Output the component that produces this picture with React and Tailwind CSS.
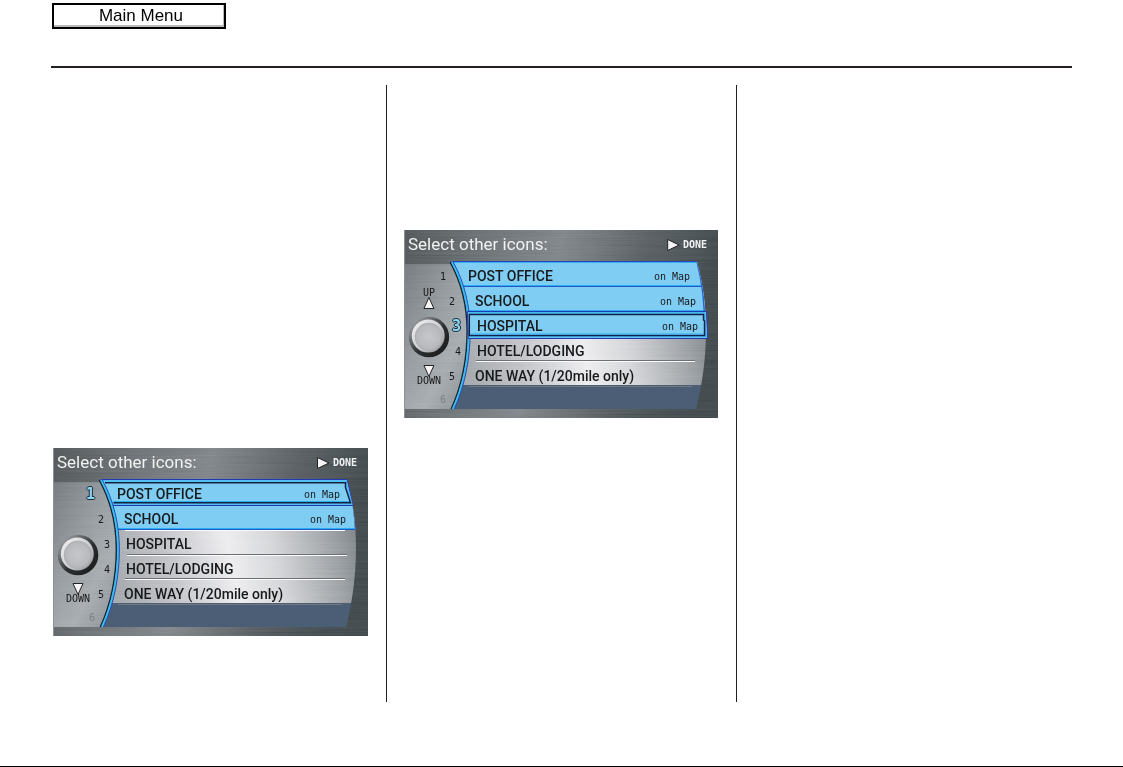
import React, { useId } from "react";

const LABELS = ["POST OFFICE", "SCHOOL", "HOSPITAL", "HOTEL/LODGING", "ONE WAY (1/20mile only)"];

// The list bends around the knob, so each row has its own indent.
const NUMBER_WIDTHS = ["w-[42px]", "w-[51px]", "w-[57px]", "w-[57px]", "w-[51px]"];
const LABEL_GAPS = ["pl-[22px]", "pl-[20px]", "pl-[16px]", "pl-[16px]", "pl-[20px]"];
const END_PADS = ["pr-[28px]", "pr-[22px]", "pr-[20px]", "pr-[20px]", "pr-[22px]"];

const LIST_SHAPE = "M48 32 H294 C301 58 303 80 303 100 C303 128 299 156 293 179 H50 C60 155 65 128 65 101 C65 76 58 50 48 32Z";
const ARC = "M47 32 C58 52 64 76 64 101 C64 128 59 155 48 179";

function ScreenArt({ selected, marked }) {
  const id = useId().replace(/:/g, "");
  return (
    <svg className="absolute inset-0 h-full w-full" viewBox="0 0 315 188" preserveAspectRatio="none" aria-hidden="true">
      <defs>
        <linearGradient id={`${id}base`} x1="0" x2="1" y1="0" y2="0.15">
          <stop offset="0" stopColor="#4d5254" />
          <stop offset="0.22" stopColor="#646a6d" />
          <stop offset="0.5" stopColor="#7c8286" />
          <stop offset="0.78" stopColor="#53595c" />
          <stop offset="1" stopColor="#3d4548" />
        </linearGradient>
        <linearGradient id={`${id}side`} x1="0" x2="0.8" y1="0" y2="1">
          <stop offset="0" stopColor="#6f7579" />
          <stop offset="0.45" stopColor="#92989c" />
          <stop offset="0.75" stopColor="#a4a9ad" />
          <stop offset="1" stopColor="#8d9296" />
        </linearGradient>
        <linearGradient id={`${id}list`} x1="0" x2="1" y1="0.1" y2="0">
          <stop offset="0" stopColor="#a3a7ab" />
          <stop offset="0.2" stopColor="#bfc0c5" />
          <stop offset="0.45" stopColor="#ececef" />
          <stop offset="0.62" stopColor="#d3d4d7" />
          <stop offset="0.85" stopColor="#989da1" />
          <stop offset="1" stopColor="#6c7377" />
        </linearGradient>
        <linearGradient id={`${id}rim`} x1="0" x2="1" y1="0" y2="1">
          <stop offset="0" stopColor="#b9bbbd" />
          <stop offset="0.3" stopColor="#6c6f72" />
          <stop offset="0.55" stopColor="#2c2f31" />
          <stop offset="1" stopColor="#151718" />
        </linearGradient>
        <linearGradient id={`${id}lip`} x1="0" x2="1" y1="0" y2="1">
          <stop offset="0" stopColor="#f4f4f4" />
          <stop offset="0.5" stopColor="#d0d1d3" />
          <stop offset="1" stopColor="#8b8d90" />
        </linearGradient>
        <radialGradient id={`${id}cap`} cx="0.5" cy="0.5" r="0.55">
          <stop offset="0" stopColor="#c6c7cb" />
          <stop offset="0.75" stopColor="#b8babe" />
          <stop offset="1" stopColor="#a4a6aa" />
        </radialGradient>
        <clipPath id={`${id}clip`}><path d={LIST_SHAPE} /></clipPath>
        <filter id={`${id}brush`} x="0" y="0" width="100%" height="100%">
          <feTurbulence type="fractalNoise" baseFrequency="0.012 0.7" numOctaves="2" seed="4" />
          <feColorMatrix type="saturate" values="0" />
          <feComponentTransfer><feFuncA type="linear" slope="0" intercept="1" /></feComponentTransfer>
        </filter>
      </defs>
      <rect width="315" height="188" fill={`url(#${id}base)`} />
      <path d="M0 34 H48 C60 54 65 76 65 101 C65 128 60 155 49 179 H0Z" fill={`url(#${id}side)`} />
      <g clipPath={`url(#${id}clip)`}>
        <rect x="46" y="32" width="260" height="124" fill={`url(#${id}list)`} />
      </g>
      <rect width="315" height="188" filter={`url(#${id}brush)`} opacity="0.3" style={{ mixBlendMode: "soft-light" }} />
      <path d="M0.5 0V188" stroke="#8d9193" />
      <g clipPath={`url(#${id}clip)`}>
        <rect x="46" y="155" width="260" height="25" fill="#4b5e75" />
        {[82, 107, 131].map((y, i) => (
          <g key={y}>
            <path d={`M${i === 1 ? 74 : 72} ${y - 0.5}H${i === 1 ? 294 : 292}`} stroke="#6c6f73" />
            <path d={`M${i === 1 ? 74 : 72} ${y + 0.5}H${i === 1 ? 294 : 292}`} stroke="#fbfbfb" />
          </g>
        ))}
        <path d="M65 156.5H289" stroke="#717880" />
        {Array.from({ length: marked }, (_, i) => (
          <g key={i}>
            <rect x="46" y={32 + i * 25} width="260" height="25" fill="#80cdf4" />
            <path d={`M46 ${56.5 + i * 25}H306`} stroke="#2456c8" />
            <path d={`M46 ${55.5 + i * 25}H306`} stroke="#25b0f3" />
          </g>
        ))}
        <path d={`M294 32 C299 52 301 ${marked * 12 + 30} 302.5 ${32 + marked * 25}`} fill="none" stroke="#2868d5" strokeWidth="1.5" />
      </g>
      <path d="M48 31.5H294" stroke="#2b43ba" />
      <path d="M48 32.5H294" stroke="#2eb2ee" />
      {selected === 0 && (
        <g fill="none">
          <path d="M48 31.5H294L300 57.5H59.5Z" fill="#80cdf4" stroke="#2438b5" />
          <path d="M50 33H293L298.7 56H60" stroke="#45bcf0" strokeWidth="1.5" />
          <path d="M52 34.8H292.5V39.5L297.5 54.8H60.5" stroke="#15203f" strokeWidth="1.5" />
          <path d="M60 53.5H296" stroke="#2bb2f3" />
        </g>
      )}
      <path d={ARC} transform="translate(-0.6 0)" fill="none" stroke="#15252f" strokeWidth="1.6" />
      <path d={ARC} transform="translate(1.1 0)" fill="none" stroke="#3abcf2" strokeWidth="2.2" />
      <path d={ARC} transform="translate(2.4 0)" fill="none" stroke="#2250b4" strokeWidth="1" />
      {selected === 2 && (
        <g fill="none">
          <path d="M63.5 81.5H303.5L304.5 108.5H64.5Z" fill="#80cdf4" stroke="#2438b5" />
          <path d="M64.5 83H301.5L303 106.5H65" stroke="#45bcf0" strokeWidth="2" />
          <path d="M65.5 84.5H300.5V90L301.5 91V105.5H65.5Z" stroke="#142049" strokeWidth="1.5" />
          <path d="M66.5 104H300" stroke="#2bb2f3" />
        </g>
      )}
      <circle cx="25" cy="107" r="20.3" fill={`url(#${id}rim)`} />
      <circle cx="24.3" cy="106" r="16.5" fill={`url(#${id}lip)`} />
      <circle cx="24.8" cy="106.8" r="14" fill={`url(#${id}cap)`} />
      <path d="M20 135.5H30L25 146.5Z" fill="#f5f5f5" stroke="#202224" />
      {selected === 2 && <path d="M20 78.5H30L25 67.5Z" fill="#f5f5f5" stroke="#202224" />}
      <path d="M264.5 9.5V20.5L276 15Z" fill="#f5f5f5" stroke="#202224" />
    </svg>
  );
}

function IconScreen({ selected, marked }) {
  return (
    <section aria-label="Select other icons" className="relative w-full max-w-[315px] overflow-hidden font-['Roboto',sans-serif]">
      <ScreenArt selected={selected} marked={marked} />
      <div className="relative h-[188px]">
        <header className="flex h-[34px] items-start justify-between pt-[3px] pr-[11px] pl-[4px] text-[#f1f2f2]">
          <h2 className="text-[17px] leading-[22px]">Select other icons:</h2>
          <button className="pt-px font-['DejaVu_Sans_Mono',monospace] text-[10px] leading-[22px] font-bold">DONE</button>
        </header>
        <ol>
          {LABELS.map((label, i) => (
            <li key={label}>
              <button className={`flex h-[25px] w-full items-center text-left text-[#17191b] ${END_PADS[i]}`}>
                <span
                  className={`${NUMBER_WIDTHS[i]} shrink-0 text-right font-['DejaVu_Sans_Mono',monospace] ${
                    i === selected
                      ? "text-[15px] font-bold text-[#8dd4f4] [text-shadow:1px_0_#17303e,-1px_0_#17303e,0_1px_#17303e,0_-1px_#17303e]"
                      : "text-[10px]"
                  }`}
                >
                  {i + 1}
                </span>
                <span className={`${LABEL_GAPS[i]} grow text-[14px] font-medium whitespace-nowrap`}>{label}</span>
                {i < marked && <span className="font-['DejaVu_Sans_Mono',monospace] text-[10px] whitespace-nowrap">on Map</span>}
              </button>
            </li>
          ))}
        </ol>
        <div className="w-[42px] text-right font-['DejaVu_Sans_Mono',monospace] text-[10px] leading-[22px] text-[#7d8286]">6</div>
        {selected > 0 && (
          <button className="absolute top-[57px] left-0 w-[50px] text-center font-['DejaVu_Sans_Mono',monospace] text-[10px] leading-[12px] text-[#17191b]">UP</button>
        )}
        <button className="absolute top-[145px] left-0 w-[50px] text-center font-['DejaVu_Sans_Mono',monospace] text-[10px] leading-[12px] text-[#17191b]">DOWN</button>
      </div>
    </section>
  );
}

export default function App() {
  return (
    <div className="flex min-h-screen flex-col bg-white pt-[3px]">
      <div className="mx-[51px] border-b-2 border-[#231f20] pb-[37px]">
        <button className="ml-px block h-[26px] w-[174px] border-2 border-black bg-white pl-[4px] font-['Liberation_Sans',Arial,sans-serif] text-[17px] leading-[22px] text-black shadow-[inset_-1px_-2px_0_#b9b9b9]">
          Main Menu
        </button>
      </div>
      <main className="mx-[51px] mt-[17px] mb-[64px] grid grow grid-cols-[336fr_350fr_335fr]">
        <div className="border-r border-[#231f20] pt-[363px] pr-[18px] pl-[2px]">
          <IconScreen selected={0} marked={2} />
        </div>
        <div className="border-r border-[#231f20] pt-[145px] pr-[18px] pl-[17px]">
          <IconScreen selected={2} marked={3} />
        </div>
        <div />
      </main>
      <div className="h-px bg-black" />
    </div>
  );
}
